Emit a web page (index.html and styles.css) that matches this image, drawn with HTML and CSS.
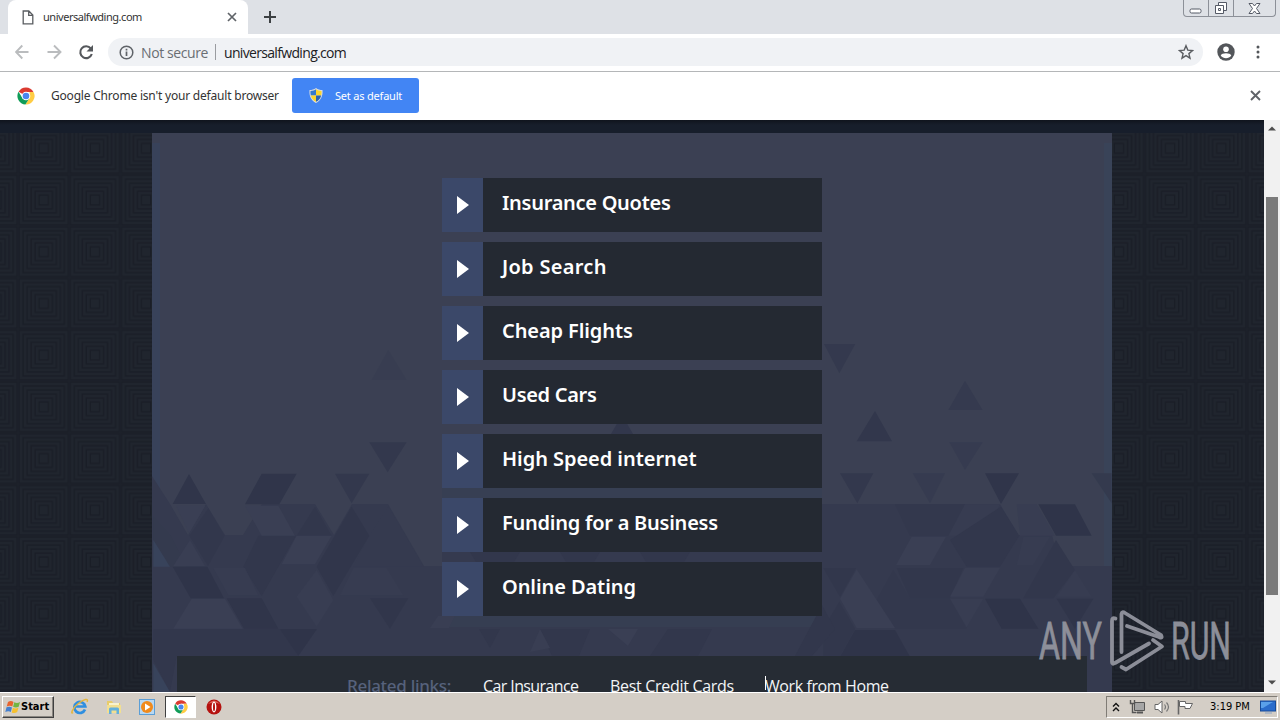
FILE: index.html
```html
<!DOCTYPE html>
<html lang="en">
<head>
    <meta charset="UTF-8">
    <meta name="viewport" content="width=device-width, initial-scale=1.0">
    <title>universalfwding.com</title>
    <link rel="stylesheet" href="styles.css">
</head>
<body>
    <svg class="defs" width="0" height="0">
        <symbol id="chrome" viewBox="0 0 18 18">
            <circle cx="9" cy="9" r="8.5" fill="#fff"/>
            <path d="M9 9 L1.6 4.7 A8.5 8.5 0 0 1 16.4 4.9 L9 4.9Z" fill="#db3a30"/>
            <path d="M16.5 4.9 A8.5 8.5 0 0 1 8.4 17.5 L12.5 11 L12.5 4.9Z" fill="#fc4"/>
            <path d="M1.5 4.8 A8.5 8.5 0 0 0 8.4 17.5 L12.2 11.5 L6 12Z" fill="#109c58"/>
            <circle cx="9" cy="9" r="4.3" fill="#fff"/>
            <circle cx="9" cy="9" r="3.3" fill="#4a86ee"/>
        </symbol>
    </svg>

    <div class="tabstrip">
        <div class="tab">
            <svg width="12" height="15" viewBox="0 0 12 15"><path d="M1.2 1h5.6l4 4v8.800H1.200zM6.700 1v4.300h4" fill="none" stroke="#5a5d61" stroke-width="1.300"/></svg>
            <span class="tab-title">universalfwding.com</span>
            <svg width="10" height="10" viewBox="0 0 10 10"><path d="M1 1l8 8M9 1l-8 8" stroke="#5f6368" stroke-width="1.700"/></svg>
        </div>
        <svg class="new-tab" width="14" height="14" viewBox="0 0 14 14"><path d="M7 1v12M1 7h12" stroke="#3c4043" stroke-width="2"/></svg>
        <div class="window-buttons">
            <div class="wb wb-min"><svg width="14" height="6" viewBox="0 0 14 6"><rect x="1" y="1" width="11" height="4" rx="1.500" fill="#fff" stroke="#555a66"/></svg></div>
            <div class="wb wb-max"><svg width="14" height="14" viewBox="0 0 14 14"><path d="M4.500 1.500h8v8h-8z" fill="#fff" stroke="#555a66"/><path d="M1.500 4.500h8v8h-8z" fill="#fff" stroke="#555a66"/><path d="M4.500 7.500h2v2h-2z" fill="none" stroke="#555a66"/></svg></div>
            <div class="wb wb-close"><svg width="13" height="11" viewBox="0 0 13 11"><path d="M1 .5h3.500l2 2.500 2-2.500H12L8.500 5.500 12 10.500H8.500l-2-2.500-2 2.500H1l3.500-5z" fill="#fff" stroke="#555a66"/></svg></div>
        </div>
    </div>

    <div class="toolbar">
        <svg class="nav" width="80" height="16" viewBox="0 0 80 16">
            <path d="M13.500 8H1M7.300 1.500L1 8L7.300 14.500" fill="none" stroke="#babcbe" stroke-width="1.900"/>
            <path d="M32.500 8h13M39 1.500L45.500 8l-6.500 6.500" fill="none" stroke="#babcbe" stroke-width="1.900"/>
            <path d="M75.800 4.500A5.900 5.900 0 1 0 76.800 10" fill="none" stroke="#55585c" stroke-width="2.100"/>
            <path d="M78 1v6.500H71.500z" fill="#55585c"/>
        </svg>
        <div class="omnibox">
            <svg width="15" height="15" viewBox="0 0 15 15"><circle cx="7.500" cy="7.500" r="6.300" fill="none" stroke="#5f6368" stroke-width="1.500"/><path d="M7.500 6.500V11M7.500 3.800v1.700" stroke="#5f6368" stroke-width="1.700"/></svg>
            <span class="not-secure">Not secure</span>
            <span class="divider"></span>
            <span class="url">universalfwding.com</span>
            <svg class="star" width="16" height="16" viewBox="0 0 16 16"><path d="M8 1.700l1.800 4.400 4.700.4-3.600 3.100 1.100 4.600L8 11.700l-4 2.500 1.100-4.600-3.600-3.100 4.700-.4z" fill="none" stroke="#5a5d61" stroke-width="1.400"/></svg>
        </div>
        <svg class="profile" width="18" height="18" viewBox="0 0 18 18"><circle cx="9" cy="9" r="8.700" fill="#53565a"/><circle cx="9" cy="6.300" r="2.800" fill="#fff"/><path d="M3.700 12.400c1-3 9.600-3 10.600 0c-2.500 3.700-8.100 3.700-10.600 0z" fill="#fff"/></svg>
        <svg class="dots" width="4" height="14" viewBox="0 0 4 14"><circle cx="2" cy="2" r="1.500" fill="#53565a"/><circle cx="2" cy="7" r="1.500" fill="#53565a"/><circle cx="2" cy="12" r="1.500" fill="#53565a"/></svg>
    </div>

    <div class="infobar">
        <svg width="18" height="18"><use href="#chrome"/></svg>
        <span class="info-text">Google Chrome isn't your default browser</span>
        <div class="default-button">
            <svg width="14" height="15" viewBox="0 0 14 15">
                <path d="M7 0C5 1.500 3 2 .5 2C0 8 2 12.500 7 15C12 12.500 14 8 13.500 2C11 2 9 1.500 7 0z" fill="#d9dde2"/>
                <path d="M7 1.300C5.500 2.400 4 2.900 1.500 3Q1.200 5.500 1.800 7.500H7z" fill="#3479cf"/>
                <path d="M7 1.300C8.500 2.400 10 2.900 12.500 3Q12.800 5.500 12.200 7.500H7z" fill="#fbd52d"/>
                <path d="M1.800 7.500Q3 12 7 13.800V7.500z" fill="#fbd52d"/>
                <path d="M12.200 7.500Q11 12 7 13.800V7.500z" fill="#2b62ae"/>
            </svg>
            <span>Set as default</span>
        </div>
        <svg class="info-close" width="11" height="11" viewBox="0 0 11 11"><path d="M1 1l9 9M10 1l-9 9" stroke="#5f6368" stroke-width="1.900"/></svg>
    </div>

    <div class="viewport">
        <div class="page">
            <svg class="pattern" width="1264" height="572">
                <defs>
                    <pattern id="squares" width="51.200" height="51.700" patternUnits="userSpaceOnUse" x="18.100" y="2.500">
                        <g fill="none" stroke="#1a1e27" stroke-width="1.500">
                            <rect x="1" y="1" width="49.200" height="49.700"/>
                            <rect x="5" y="5" width="41.200" height="41.700"/>
                            <rect x="9" y="9" width="33.200" height="33.700"/>
                            <rect x="13" y="13" width="25.200" height="25.700"/>
                            <rect x="17" y="17" width="17.200" height="17.700"/>
                            <rect x="21" y="21" width="9.200" height="9.700"/>
                        </g>
                    </pattern>
                </defs>
                <rect width="1264" height="572" fill="#20252e"/>
                <rect width="1264" height="572" fill="url(#squares)"/>
            </svg>
            <div class="top-band"></div>
            <div class="panel">
                <svg class="triangles" width="960" height="559" viewBox="152 133 960 559">
                    <rect x="152" y="143" width="8" height="549" fill="#38425a"/>
                    <rect x="1104" y="143" width="8" height="549" fill="#394358"/>
                    <!-- shade of the lower rows -->
                    <path d="M152 476L170 504L188 535L206 504L225 535H243L262 504H315L334 535L352 504L388 504L424 566H442V692H152z" fill="#353a4f"/>
                    <path d="M822 504H990L1000 504L1018 535H1052L1060 566H1112V692H822z" fill="#353a4f"/>
                    <path d="M442 520H822V692H442z" fill="#353a4f"/>
                    <!-- left side -->
                    <g transform="translate(150 340) scale(.3333)" fill="#30354a">
                        <path d="M117 402L168 492H68z"/>
                        <path d="M335 401H440L388 493H285z"/>
                        <path d="M555 401H658L605 490z" fill="#33384d"/>
                        <path d="M658 307H770L713 397z" fill="#33384d"/>
                        <path d="M715 30L770 120H665z" fill="#383d51"/>
                        <path d="M175 505L224 587L174 678L118 587z" fill="#32374c"/>
                        <path d="M495 500L545 587H440z" fill="#32374c"/>
                        <path d="M605 500L658 587L550 768L500 680z" fill="#31364b"/>
                        <path d="M715 500L820 680H610L658 587z" fill="#353a4f"/>
                        <path d="M325 587H438L335 768L280 680z" fill="#32374c"/>
                        <path d="M68 680H172L222 775H122z" fill="#2f3449"/>
                        <path d="M230 775H335L385 866H282z" fill="#30354a"/>
                        <path d="M660 775H775L720 866z" fill="#31364b"/>
                        <path d="M10 530L62 587L110 680H60L10 600z" fill="#343a4e"/>
                        <path d="M10 868H500L445 947H80L60 1056L10 960z" fill="#32374c"/>
                        <path d="M390 868H500L445 947z" fill="#2f3449"/>
                        <path d="M78 497H166L117 580z" fill="#3a3f54"/>
                        <path d="M285 497H385L435 587H335z" fill="#3a3f54"/>
                        <path d="M440 587H545L495 673H395z" fill="#3a3f54"/>
                        <path d="M120 600L165 678H70z" fill="#393e53"/>
                        <path d="M125 776H225L278 866H70z" fill="#3a3f54"/>
                        <path d="M190 684H285L325 766H235z" fill="#373c51"/>
                        <path d="M500 690L550 780L500 860L440 770z" fill="#383d52"/>
                        <path d="M610 684H710L760 766H570z" fill="#373c51"/>
                        <path d="M10 600L60 680H10z" fill="#38435b"/>
                        <path d="M10 970L60 1056H10z" fill="#38435b"/>
                    </g>
                    <!-- right side -->
                    <g transform="translate(820 340) scale(.3333)" fill="#30354a">
                        <path d="M12 12H106L58 100z" fill="#34394e"/>
                        <path d="M435 122L488 210H385z" fill="#353a4f"/>
                        <path d="M165 213L216 304H110z" fill="#32374c"/>
                        <path d="M388 307H488L435 390z" fill="#363b50"/>
                        <path d="M60 400H160L112 490z" fill="#33384d"/>
                        <path d="M278 400H375L330 490z" fill="#363b50"/>
                        <path d="M495 400H597L543 492z"/>
                        <path d="M815 400H875V490z" fill="#343a4e"/>
                        <path d="M655 493H765L815 587H708z" fill="#2f3449"/>
                        <path d="M225 493H435L385 587H270z" fill="#33384d"/>
                        <path d="M435 493H540L490 587H385z" fill="#373c51"/>
                        <path d="M543 500L598 587L540 680H440L390 600z" fill="#32374c"/>
                        <path d="M708 600L765 690L700 775H610z" fill="#32374c"/>
                        <path d="M230 684H430L390 775H270z" fill="#32374c"/>
                        <path d="M10 684H108L60 770z" fill="#32374c"/>
                        <path d="M495 776H600L655 866H545z" fill="#2f3449"/>
                        <path d="M710 776H820L765 866z" fill="#30354a"/>
                        <path d="M170 780L220 690L270 776H390L440 866H225z" fill="#33384d"/>
                        <path d="M105 870H225L270 950H60z" fill="#2f3449"/>
                        <path d="M58 785L105 866L60 947H10V866z" fill="#32374c"/>
                        <path d="M275 590H378L330 675H228z" fill="#3a3f54"/>
                        <path d="M110 688L225 864H110L60 776z" fill="#3a3f54"/>
                        <path d="M435 684H540L490 770H390z" fill="#393e53"/>
                        <path d="M390 776H490L440 862z" fill="#383d52"/>
                        <path d="M590 493H650L705 587H600z" fill="#383d52"/>
                        <path d="M610 590H690L640 675H590z" fill="#373c51"/>
                        <path d="M765 690L815 770H710z" fill="#373c51"/>
                    </g>
                    <!-- middle, seen between the buttons -->
                    <g fill="#32374c">
                        <path d="M622 415L640 446H604z"/>
                        <path d="M442 488H822V498H442z" fill="#373f53"/>
                        <path d="M470 552H520L514 562H476zM560 552H600L594 562H566zM640 552H690L684 562H646z"/>
                        <path d="M442 616H822V627H442z" fill="#363e52"/>
                        <path d="M479 629H500L490 648zM540 629H590L579 656H552zM668 629H712L698 656H650zM822 605L835 629L812 656H795z"/>
                        <path d="M608 629H638L628 646z" fill="#3a3f54"/>
                        <path d="M438 616H455L449 628H430zM540 629L550 648L530 652z" fill="#393e53"/>
                    </g>
                </svg>
                <div class="links">
                    <div class="link"><span class="arrow"><i></i></span><span class="label l1">Insurance Quotes</span></div>
                    <div class="link"><span class="arrow"><i></i></span><span class="label l2">Job Search</span></div>
                    <div class="link"><span class="arrow"><i></i></span><span class="label l3">Cheap Flights</span></div>
                    <div class="link"><span class="arrow"><i></i></span><span class="label l4">Used Cars</span></div>
                    <div class="link"><span class="arrow"><i></i></span><span class="label l5">High Speed internet</span></div>
                    <div class="link"><span class="arrow"><i></i></span><span class="label l6">Funding for a Business</span></div>
                    <div class="link"><span class="arrow"><i></i></span><span class="label l7">Online Dating</span></div>
                </div>
                <div class="related">
                    <span class="related-title">Related links:</span>
                    <span class="r1">Car Insurance</span>
                    <span class="r2">Best Credit Cards</span>
                    <span class="r3">Work from Home</span>
                </div>
            </div>
            <div class="cursor"></div>
            <svg class="watermark" width="200" height="70" viewBox="1035 605 200 70">
                <text x="1039" y="659" textLength="63" lengthAdjust="spacingAndGlyphs">ANY</text>
                <g fill="none" stroke="#92949e" stroke-width="3.800" stroke-linejoin="round" stroke-linecap="round">
                    <path d="M1115.500 618.500Q1112 617 1112 621V662Q1112 665 1115 663L1149 643.500"/>
                    <path d="M1121.500 652V614Q1122 611 1125 613L1161 635Q1163 639 1159 637L1127 626"/>
                    <path d="M1153 640L1162 646.500L1126 669.500L1121.500 667"/>
                </g>
                <text x="1171" y="659" textLength="60" lengthAdjust="spacingAndGlyphs">RUN</text>
            </svg>
        </div>
        <div class="scrollbar">
            <svg width="8" height="5" viewBox="0 0 8 5"><path d="M0 4.500L4 .5L8 4.500z" fill="#4d4d4d"/></svg>
            <div class="thumb"></div>
            <svg width="8" height="5" viewBox="0 0 8 5"><path d="M0 .5L4 4.500L8 .5z" fill="#4d4d4d"/></svg>
        </div>
    </div>

    <div class="taskbar">
        <div class="start">
            <svg width="16" height="16" viewBox="0 0 16 16">
                <path d="M3 3Q6 1 8.500 3L7.300 7.500Q5 6 1.700 7.500z" fill="#e8642f"/>
                <path d="M9.300 3.300Q12 5 15 3L13.700 7.700Q11 9.300 8.100 7.800z" fill="#72b543"/>
                <path d="M1.500 8.300Q4.500 7 7 8.500L5.800 13Q3.500 11.500.3 13z" fill="#4580cf"/>
                <path d="M7.900 8.800Q10.500 10.200 13.500 8.500L12.200 13Q9.500 15 6.700 13.400z" fill="#f6c02e"/>
            </svg>
            <span>Start</span>
        </div>
        <div class="quick">
            <svg width="18" height="17" viewBox="0 0 18 17">
                <path d="M14 11.500A5.500 5.500 0 1 1 14.300 8.500H4.500" fill="none" stroke="#2f8fe0" stroke-width="2.700"/>
                <path d="M2 14.500C-1 17 2 9 8 5C13 1 18 0 16 4" fill="none" stroke="#e5b63d" stroke-width="1.500"/>
            </svg>
            <svg width="16" height="16" viewBox="0 0 16 16">
                <path d="M1 2h5l1 2h7v10H1z" fill="#e8cc6a"/><path d="M3 4h10v4H3z" fill="#f9f3cd"/>
                <path d="M1 6h14v8H1z" fill="#f2df91"/><path d="M3 15V10q0-1.500 1.500-1.500h7Q13 8.500 13 10v5h-2.500v-3.500h-5V15z" fill="#63b0dc"/>
            </svg>
            <svg width="16" height="16" viewBox="0 0 16 16">
                <rect x=".5" y=".5" width="15" height="15" fill="#b8d8f2" stroke="#5b9ed6"/>
                <circle cx="8" cy="8" r="6" fill="#f08a1c"/><path d="M6 4.500L11.500 8L6 11.500z" fill="#fff"/>
            </svg>
            <div class="active-app"><svg width="14" height="14"><use href="#chrome"/></svg></div>
            <svg width="16" height="16" viewBox="0 0 16 16">
                <circle cx="8" cy="8" r="7.500" fill="#b5120f"/><path d="M2 5Q8-2 14 5Q8 2 2 5z" fill="#dd6259"/>
                <ellipse cx="8" cy="8" rx="2.400" ry="5.400" fill="#fff"/><ellipse cx="8" cy="8" rx="1" ry="4.300" fill="#b5120f"/>
            </svg>
        </div>
        <div class="tray">
            <svg width="8" height="10" viewBox="0 0 8 10"><path d="M1 4.500L4 1.500L7 4.500M1 9L4 6L7 9" fill="none" stroke="#111" stroke-width="1.400"/></svg>
            <svg width="16" height="16" viewBox="0 0 16 16"><path d="M5.500 3.500h10v8h-10z" fill="#a6a6a6" stroke="#555"/><path d="M8 13.500h6" stroke="#555" stroke-width="2"/><path d="M1.500 1v3.500h4V1M3.500 4.500v9h4" fill="none" stroke="#555" stroke-width="1.400"/></svg>
            <svg width="17" height="14" viewBox="0 0 17 14"><path d="M1 4.500h3L8 1v12L4 9.500H1z" fill="#fff" stroke="#666"/><path d="M10.500 4.500q2 2.500 0 5M12.500 2.500q4 4.500 0 9" fill="none" stroke="#777" stroke-width="1.200"/></svg>
            <svg class="flag" width="17" height="16" viewBox="0 0 17 16"><path d="M1.500 1v14.500" stroke="#666" stroke-width="1.600"/><path d="M2.500 2.500h6v2h7l-2.500 5H8v-2H2.500z" fill="#fff" stroke="#666"/></svg>
            <span class="clock">3:19 PM</span>
            <svg class="desktop" width="17" height="14" viewBox="0 0 17 14"><rect x=".5" y="1" width="15" height="10" fill="#2a6ccb" stroke="#164b99"/><path d="M1 2h12L3 8H1z" fill="#5aa0ea"/><path d="M5 13h7" stroke="#8aa2c2"/></svg>
        </div>
    </div>
</body>
</html>
```

FILE: styles.css
```css
* {
    box-sizing: border-box;
}
body {
    margin: 0;
    width: 1280px;
    height: 720px;
    overflow: hidden;
    display: flex;
    flex-direction: column;
    font-family: "DejaVu Sans Condensed", "DejaVu Sans", sans-serif;
    color: #333;
    background-color: #fff;
}
svg {
    display: block;
    flex: none;
}
span {
    white-space: nowrap;
}
.defs {
    position: absolute;
}

/* tabs */
.tabstrip {
    height: 34px;
    flex: none;
    display: flex;
    align-items: flex-start;
    background-color: #dee1e6;
}
.tab {
    width: 240px;
    height: 34px;
    margin-left: 8px;
    padding: 0 11px 0 14px;
    display: flex;
    align-items: center;
    background-color: #fff;
    border-radius: 8px 8px 0 0;
}
.tab-title {
    flex: 1;
    margin-left: 9px;
    margin-top: -2px;
    font-family: "Noto Sans", sans-serif;
    font-size: 11px;
    letter-spacing: -0.47px;
}
.new-tab {
    margin: 10px 0 0 15px;
}
.window-buttons {
    display: flex;
    margin: 0 4px 0 auto;
    height: 17px;
    border: 1px solid #8c9098;
    border-top: none;
    border-radius: 0 0 4px 4px;
}
.wb {
    display: flex;
    justify-content: center;
    height: 16px;
}
.wb-min { width: 24px; padding-top: 8px; }
.wb-max { width: 26px; padding-top: 1px; border-left: 1px solid #8c9098; border-right: 1px solid #8c9098; }
.wb-close { width: 41px; padding-top: 3px; }

/* address bar */
.toolbar {
    height: 38px;
    flex: none;
    display: flex;
    align-items: center;
    padding-bottom: 1px;
    border-bottom: 1px solid #b4b6b8;
    background-color: #fff;
}
.nav {
    margin-left: 15px;
}
.omnibox {
    width: 1095px;
    height: 28px;
    margin-left: 13px;
    padding: 0 9px 0 11px;
    display: flex;
    align-items: center;
    background-color: #f0f2f5;
    border-radius: 14px;
    font-family: "Open Sans", sans-serif;
    font-size: 14px;
}
.not-secure {
    width: 67px;
    margin-left: 7px;
    letter-spacing: -0.4px;
    color: #6a6e73;
}
.divider {
    width: 1px;
    height: 16px;
    margin: 0 8px 0 7px;
    background-color: #9a9ca0;
}
.url {
    letter-spacing: -0.67px;
    color: #202124;
}
.star {
    margin-left: auto;
}
.profile {
    margin-left: 14px;
}
.dots {
    margin-left: 21px;
}

/* default browser bar */
.infobar {
    height: 48px;
    flex: none;
    display: flex;
    align-items: center;
    padding: 0 19px 1px 17px;
    font-family: "Noto Sans", sans-serif;
    background-color: #fff;
}
.info-text {
    width: 241px;
    margin-left: 16px;
    font-size: 12px;
    letter-spacing: -0.2px;
}
.default-button {
    width: 127px;
    height: 35px;
    padding: 0 0 1px 17px;
    display: flex;
    align-items: center;
    gap: 12px;
    color: #fff;
    font-size: 11px;
    letter-spacing: -0.2px;
    background-color: #4285f4;
    border-radius: 3px;
}
.info-close {
    margin-left: auto;
}

/* web page */
.viewport {
    height: 572px;
    flex: none;
    display: flex;
}
.page {
    position: relative;
    width: 1264px;
    height: 572px;
    overflow: hidden;
}
.pattern {
    position: absolute;
    top: 0;
    left: 0;
}
.top-band {
    position: relative;
    height: 13px;
    background: linear-gradient(#10141d, #171e2b 5px, #171e2b);
}
.panel {
    position: relative;
    width: 960px;
    height: 559px;
    margin: 0 auto;
    padding: 45px 25px 0;
    background-color: #3b4053;
}
.triangles {
    position: absolute;
    top: 0;
    left: 0;
}
.links {
    position: relative;
    width: 380px;
    margin: 0 auto;
    display: flex;
    flex-direction: column;
    gap: 10px;
}
.link {
    height: 54px;
    display: flex;
    background-color: #242932;
}
.arrow {
    width: 41px;
    padding-left: 15px;
    display: flex;
    align-items: center;
    background-color: #3b4869;
}
.arrow i {
    border-left: 12px solid #fff;
    border-top: 9px solid transparent;
    border-bottom: 9px solid transparent;
}
.label {
    margin-left: 19px;
    font-family: "Noto Sans", sans-serif;
    font-size: 20px;
    font-weight: 600;
    line-height: 49px;
    color: #fff;
}
.l1 { letter-spacing: -0.28px; }
.l2 { letter-spacing: 0.3px; }
.l3 { letter-spacing: -0.1px; }
.l4 { letter-spacing: -0.3px; }
.l5 { letter-spacing: -0.05px; }
.l6 { letter-spacing: -0.24px; }
.l7 { letter-spacing: -0.08px; }
.related {
    position: relative;
    height: 60px;
    margin-top: 40px;
    padding-left: 170px;
    display: flex;
    font-family: "Open Sans", sans-serif;
    font-size: 16px;
    line-height: 60px;
    color: #f2f4f6;
    background-color: #262c34;
}
.related-title {
    width: 136px;
    font-family: "Noto Sans", sans-serif;
    font-size: 17px;
    font-weight: 500;
    letter-spacing: -0.3px;
    color: #56627c;
}
.r1 { width: 127px; letter-spacing: -0.6px; }
.r2 { width: 155px; letter-spacing: -0.3px; }
.r3 { letter-spacing: -0.4px; }
.cursor {
    position: absolute;
    left: 765px;
    top: 556px;
    width: 1px;
    height: 14px;
    background-color: #fff;
}
.watermark {
    position: absolute;
    left: 1035px;
    top: 485px;
    font-family: Roboto, sans-serif;
    font-size: 52px;
    fill: #92949e;
    stroke: #92949e;
    stroke-width: 0.8;
    opacity: 0.95;
}
.scrollbar {
    width: 16px;
    display: flex;
    flex-direction: column;
    align-items: center;
    padding: 6px 0 7px;
    background-color: #f1f1f1;
}
.thumb {
    width: 12px;
    height: 398px;
    margin: 66px 0 auto;
    background-color: #7b7b7b;
}

/* taskbar */
.taskbar {
    height: 28px;
    flex: none;
    display: flex;
    align-items: center;
    padding: 0 2px;
    border-top: 1px solid #fff;
    background-color: #d4cec6;
}
.start {
    width: 52px;
    height: 22px;
    padding-left: 2px;
    display: flex;
    align-items: center;
    font-size: 11px;
    font-weight: bold;
    color: #000;
    border: 1px solid;
    border-color: #fff #404040 #404040 #fff;
    box-shadow: inset -1px -1px #8a8680;
}
.start span {
    margin-left: 0;
}
.quick {
    display: flex;
    align-items: center;
    margin-left: 17px;
}
.quick > svg + svg {
    margin-left: 17px;
}
.quick > .active-app {
    width: 31px;
    height: 22px;
    margin: 0 10px;
    display: flex;
    align-items: center;
    justify-content: center;
    background-color: #fff;
    border: 1px solid;
    border-color: #404040 #fff #fff #404040;
}
.tray {
    width: 172px;
    height: 22px;
    margin-left: auto;
    padding-left: 5px;
    display: flex;
    align-items: center;
    border: 1px solid;
    border-color: #807c76 #fff #fff #807c76;
}
.tray svg + svg {
    margin-left: 9px;
}
.tray .flag {
    margin-left: 6px;
}
.clock {
    width: 45px;
    margin-left: 16px;
    font-size: 11px;
    color: #000;
}
.desktop {
    margin-left: 6px;
}
```
